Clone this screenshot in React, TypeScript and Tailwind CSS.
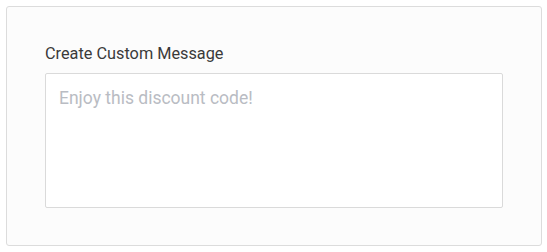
export default function App() {
  return (
    <div className="h-[252px] w-[547px] bg-white p-[6px]" style={{ fontFamily: "Roboto, 'Liberation Sans', sans-serif" }}>
      <div className="flex h-[240px] w-[536px] flex-col rounded-[3px] border border-[#dcdcdc] bg-[#fcfcfc] px-[38px] pt-[35px]">
        <label className="mb-[7px] text-[16.3px] font-normal leading-[24px] text-[#3a3a3a]">Create Custom Message</label>
        <textarea
          className="h-[135px] w-[458px] resize-none rounded-[2px] border border-[#dadada] bg-white px-[13px] py-[12px] text-[17.5px] leading-[24px] text-[#333] placeholder:text-[#b9bcc3] focus:outline-none"
          placeholder="Enjoy this discount code!"
        />
      </div>
    </div>
  );
}
